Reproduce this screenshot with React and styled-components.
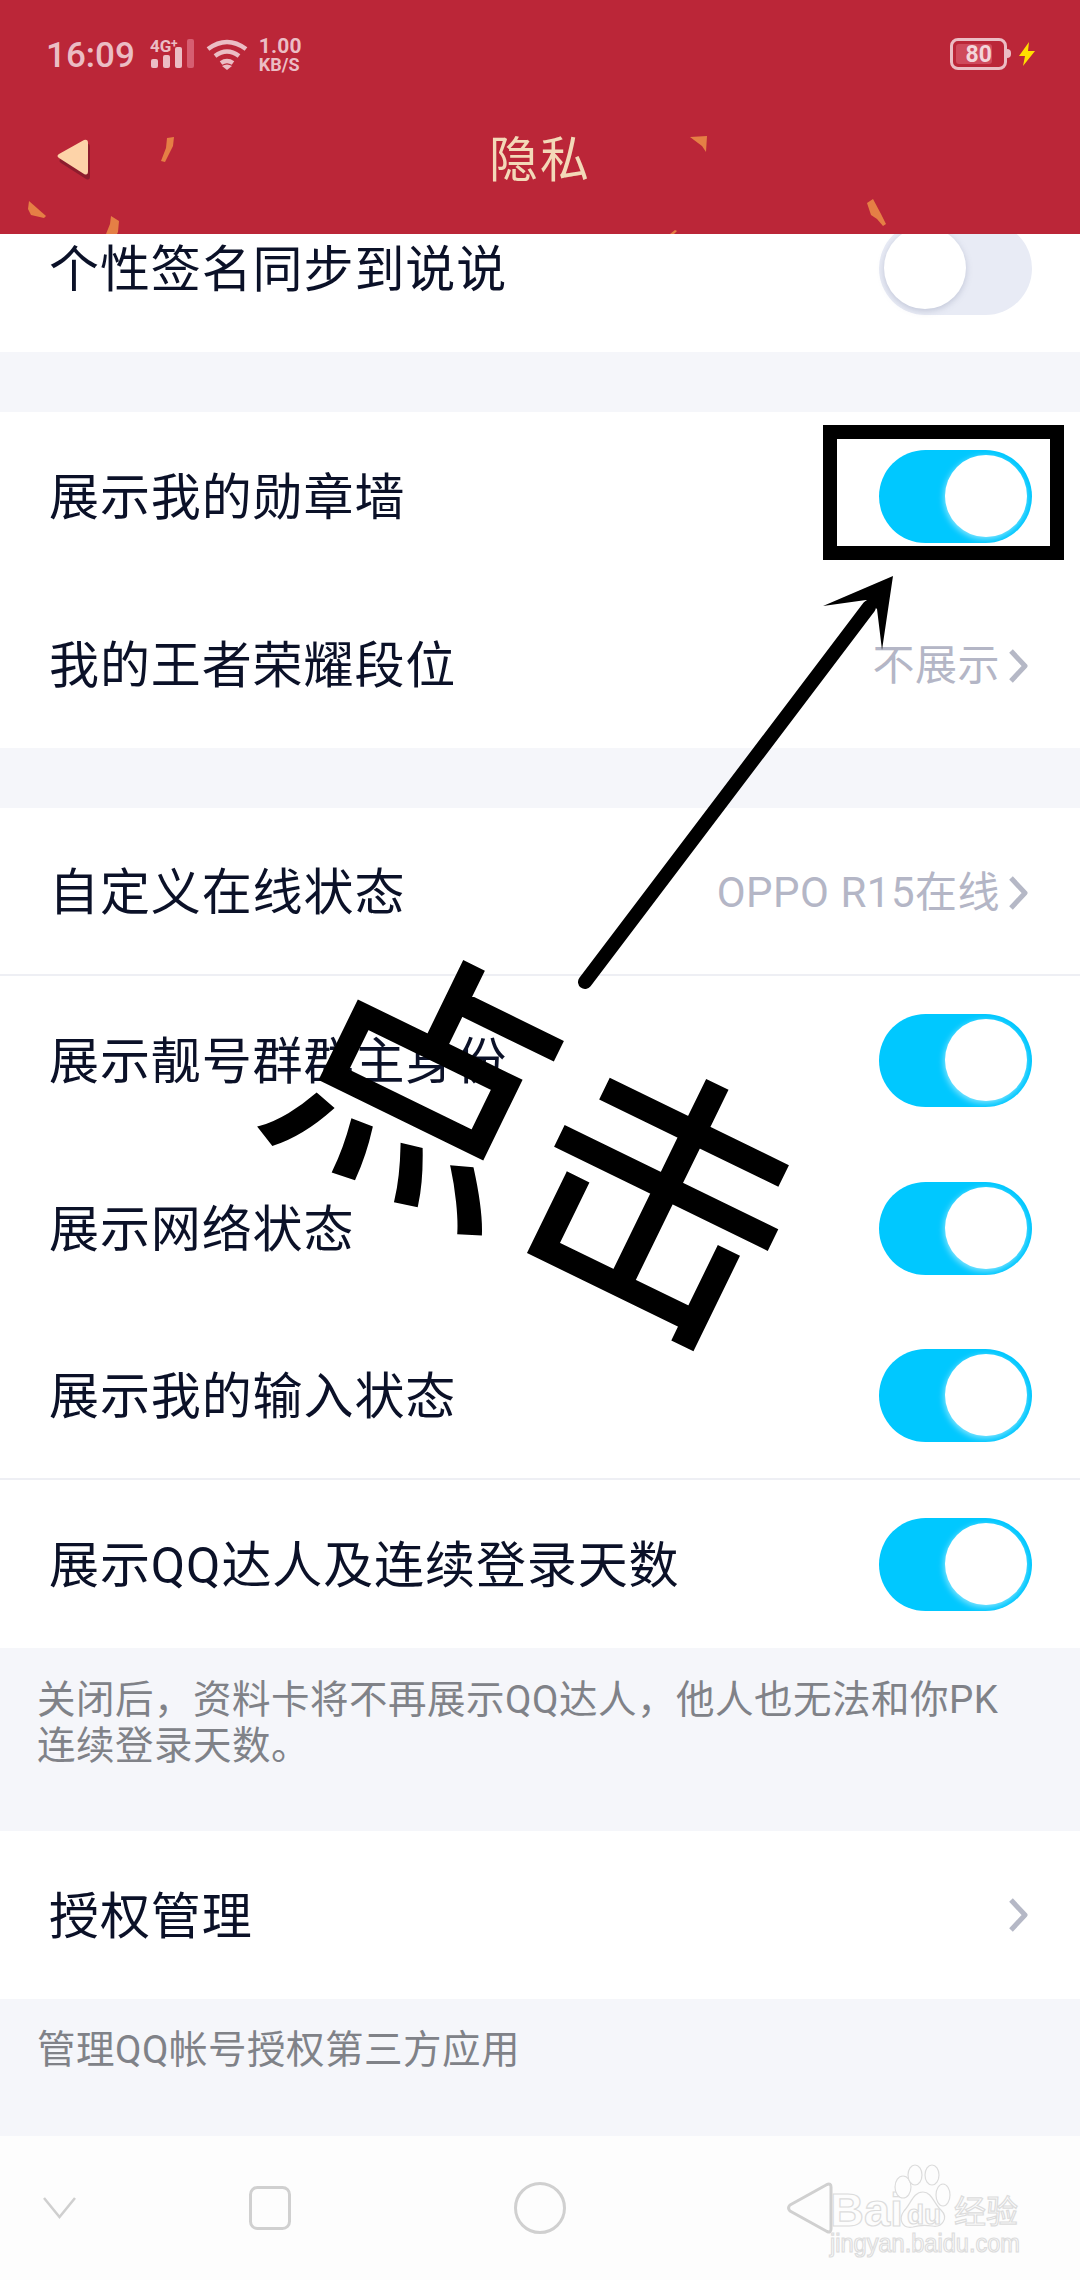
import React from "react";
import styled, { createGlobalStyle } from "styled-components";

const Global = createGlobalStyle`
  html, body { margin: 0; padding: 0; background: #f5f6fa; }
  * { box-sizing: border-box; }
`;

const FONT = `Roboto, "Noto Sans CJK SC", sans-serif`;

const Page = styled.div`
  position: relative;
  width: 1080px;
  height: 2280px;
  display: flex;
  flex-direction: column;
  overflow: hidden;
  background: #f5f6fa;
  font-family: ${FONT};
`;
const Header = styled.header`
  position: relative;
  z-index: 2;
  flex: 0 0 234px;
  display: flex;
  flex-direction: column;
  background: #bb2638;
`;
const Confetti = styled.svg`
  position: absolute;
  inset: 0;
`;
const StatusBar = styled.div`
  height: 108px;
  display: flex;
  align-items: center;
  padding: 0 45px 0 46px;
  color: #ebbdc4;
`;
const Time = styled.span`
  font-size: 35px;
  line-height: 44px;
  font-weight: 500;
  margin: 4px 15px 0 0;
  white-space: nowrap;
`;
const Glyphs = styled.svg`
  display: block;
  flex: none;
  margin-left: ${(p) => p.$ml || 0}px;
`;
const Speed = styled.div`
  display: flex;
  flex-direction: column;
  margin-left: 11px;
  font-weight: 700;
`;
const SpeedValue = styled.span`
  font-size: 21px;
  line-height: 20px;
  letter-spacing: 0.2px;
`;
const SpeedUnit = styled.span`
  font-size: 18px;
  line-height: 17px;
`;
const StatusRight = styled.div`
  margin-left: auto;
  display: flex;
  align-items: center;
`;
const Battery = styled.div`
  position: relative;
  width: 57px;
  height: 32px;
  border: 3px solid #ebbdc4;
  border-radius: 8px;
  padding: 3px;
  display: flex;
  &::after {
    content: "";
    position: absolute;
    right: -7px;
    top: 8px;
    width: 4px;
    height: 9px;
    border-radius: 0 4px 4px 0;
    background: #ebbdc4;
  }
`;
const BatteryFill = styled.div`
  width: 36px;
  height: 100%;
  background: #cf4a5c;
  border-radius: 3px;
  display: flex;
  align-items: center;
  justify-content: flex-end;
  font-size: 23px;
  font-weight: 700;
  color: #f3d5da;
  line-height: 1;
  white-space: nowrap;
`;
const TitleBar = styled.div`
  position: relative;
  height: 104px;
  display: flex;
  align-items: center;
  justify-content: center;
`;
const BackIcon = styled.svg`
  position: absolute;
  left: 50px;
  top: 26px;
`;
const Title = styled.h1`
  margin: 0;
  font-size: 49px;
  font-weight: 400;
  color: #f3d9b8;
  letter-spacing: 2px;
  line-height: 1;
`;
const Scroll = styled.main`
  flex: 1;
  min-height: 0;
  overflow: hidden;
`;
const ScrollInner = styled.div`
  margin-top: -50px;
`;
const Section = styled.section`
  background: #fff;
  margin-top: ${(p) => p.$gap || 0}px;
`;
const Row = styled.div`
  height: 168px;
  padding: 0 48px 0 49px;
  display: flex;
  align-items: center;
  justify-content: space-between;
  border-bottom: ${(p) => (p.$divider ? "2px solid #eeeff4" : "none")};
`;
const Label = styled.span`
  font-size: 50px;
  line-height: 60px;
  margin-top: 3px;
  letter-spacing: 0.9px;
  color: #0b1128;
  white-space: nowrap;
`;
const Value = styled.div`
  display: flex;
  align-items: center;
  gap: 9px;
  font-size: 42px;
  line-height: 50px;
  letter-spacing: 0.5px;
  margin-top: 3px;
  color: #b4b6c6;
  white-space: nowrap;
`;
const Chevron = styled.svg`
  display: block;
  flex: none;
  margin-right: 3px;
`;
const Track = styled.div`
  width: 153px;
  height: 93px;
  border-radius: 47px;
  padding: 5px 5px;
  display: flex;
  align-items: center;
  justify-content: ${(p) => (p.$on ? "flex-end" : "flex-start")};
  background: ${(p) => (p.$on ? "#00c8ff" : "#e8ebf5")};
`;
const Knob = styled.div`
  width: 82px;
  height: 82px;
  border-radius: 50%;
  background: #fff;
  box-shadow: ${(p) => (p.$on ? "-1px 2px 6px rgba(255,255,255,.55)" : "0 2px 6px rgba(120,130,160,.35)")};
`;
const Note = styled.p`
  margin: 0;
  height: ${(p) => p.$h}px;
  padding: ${(p) => p.$pt}px 37px 0 37px;
  font-size: 38.5px;
  line-height: 46px;
  color: #808288;
  letter-spacing: 0.5px;
  white-space: nowrap;
`;
const Nav = styled.nav`
  flex: 0 0 144px;
  display: flex;
  align-items: center;
  padding-left: 43px;
  background: #fdfdfd;
`;
const NavGlyph = styled.svg`
  display: block;
  flex: none;
  margin-left: ${(p) => p.$ml || 0}px;
`;
const Overlay = styled.svg`
  position: absolute;
  left: 0;
  top: 0;
  z-index: 3;
  pointer-events: none;
`;
const HandWord = styled.div`
  position: absolute;
  z-index: 3;
  left: 280px;
  top: 979px;
  font-family: "Noto Sans CJK SC", sans-serif;
  font-size: 268px;
  font-weight: 400;
  line-height: 290px;
  color: #000;
  -webkit-text-stroke: 4px #000;
  white-space: nowrap;
  transform: rotate(26deg);
  pointer-events: none;
`;
const Watermark = styled.svg`
  position: absolute;
  z-index: 4;
  left: 825px;
  top: 2160px;
`;
const WmText = styled.text`
  fill: #fdfdfd;
  stroke: #dcdcdc;
  stroke-width: 1.2px;
  font-family: ${(p) => p.$f || `"Liberation Sans", sans-serif`};
  font-weight: ${(p) => p.$w || 700};
  font-size: ${(p) => p.$s}px;
`;

const Toggle = ({ on }) => (
  <Track $on={on}>
    <Knob $on={on} />
  </Track>
);

const Arrow = () => (
  <Chevron width="20" height="36" viewBox="0 0 20 36">
    <path d="M2 3 L16 18 L2 33" fill="none" stroke="#b5b8c6" strokeWidth="5" strokeLinejoin="round" />
  </Chevron>
);

const toggles = ["展示靓号群群主身份", "展示网络状态", "展示我的输入状态", "展示QQ达人及连续登录天数"];

export default function App() {
  return (
    <Page>
      <Global />
      <Header>
        <Confetti width="1080" height="234" viewBox="0 0 1080 234">
          <g fill="#e57f45">
            <path d="M167 138 L174 137 L173 146 L165 162 L161 161 L166 148 Z" />
            <path d="M29 201 L46 216 L44 218 L31 215 L28 209 Z" />
            <path d="M111 216 L119 221 L118 232 L117 234 L106 234 L110 224 Z" />
            <path d="M690 137 L707 136 L706 152 L702 146 Z" />
            <path d="M867 203 L873 199 L881 214 L886 224 L883 226 L877 219 L871 215 Z" />
            <path d="M670 234 L675 230 L677 231 L674 234 Z" />
          </g>
        </Confetti>
        <StatusBar>
          <Time>16:09</Time>
          <Glyphs width="44" height="32" viewBox="0 0 44 32">
            <text x="0" y="14" fontFamily="Roboto, sans-serif" fontWeight="700" fontSize="17" fill="#ebbdc4">4G</text>
            <text x="21" y="10" fontFamily="Roboto, sans-serif" fontWeight="700" fontSize="12" fill="#ebbdc4">+</text>
            <rect x="1" y="21" width="7" height="9" rx="2" fill="#ebbdc4" />
            <rect x="13" y="17" width="7" height="13" rx="2" fill="#ebbdc4" />
            <rect x="25" y="9" width="7" height="21" rx="2" fill="#ebbdc4" />
            <rect x="37" y="1" width="7" height="29" rx="2" fill="#d65e71" />
          </Glyphs>
          <Glyphs $ml={12} width="42" height="32" viewBox="0 0 42 32">
            <g fill="none" stroke="#ebbdc4" strokeWidth="4.5">
              <path d="M2 11 Q21 -3 40 11" />
              <path d="M9 18 Q21 9 33 18" />
              <path d="M15 25 Q21 21 27 25" />
            </g>
            <path d="M21 32 L16 28 Q21 25 26 28 Z" fill="#ebbdc4" />
          </Glyphs>
          <Speed>
            <SpeedValue>1.00</SpeedValue>
            <SpeedUnit>KB/S</SpeedUnit>
          </Speed>
          <StatusRight>
            <Battery>
              <BatteryFill>80</BatteryFill>
            </Battery>
            <Glyphs $ml={12} width="16" height="24" viewBox="0 0 16 24">
              <path d="M10 0 L0 14 L6 14 L4 24 L16 9 L9 9 Z" fill="#ffdf00" />
            </Glyphs>
          </StatusRight>
        </StatusBar>
        <TitleBar>
          <BackIcon width="46" height="52" viewBox="0 0 46 52">
            <path d="M10 21 L35 7 Q39 6 39 10 L39 39 Q39 44 35 42 L10 26 Q7 24 10 21 Z" fill="#7d1a2a" opacity=".75" transform="translate(1 3)" />
            <path d="M9 20 L34 6 Q38 5 38 9 L38 37 Q38 42 34 40 L9 24 Q6 22 9 20 Z" fill="#fdd3a8" />
          </BackIcon>
          <Title>隐私</Title>
        </TitleBar>
      </Header>

      <Scroll>
        <ScrollInner>
          <Section>
            <Row>
              <Label>个性签名同步到说说</Label>
              <Toggle on={false} />
            </Row>
          </Section>
          <Section $gap={60}>
            <Row>
              <Label>展示我的勋章墙</Label>
              <Toggle on />
            </Row>
            <Row>
              <Label>我的王者荣耀段位</Label>
              <Value>不展示<Arrow /></Value>
            </Row>
          </Section>
          <Section $gap={60}>
            <Row $divider>
              <Label>自定义在线状态</Label>
              <Value>OPPO R15在线<Arrow /></Value>
            </Row>
            {toggles.map((t, i) => (
              <Row key={t} $divider={i === 2}>
                <Label>{t}</Label>
                <Toggle on />
              </Row>
            ))}
          </Section>
          <Note $h={183} $pt={29}>
            关闭后，资料卡将不再展示QQ达人，他人也无法和你PK
            <br />
            连续登录天数。
          </Note>
          <Section>
            <Row>
              <Label>授权管理</Label>
              <Arrow />
            </Row>
          </Section>
          <Note $h={137} $pt={28}>管理QQ帐号授权第三方应用</Note>
        </ScrollInner>
      </Scroll>

      <Nav>
        <NavGlyph width="33" height="22" viewBox="0 0 33 22">
          <path d="M1 1 L16.5 20 L32 1" fill="none" stroke="#cfcfcf" strokeWidth="2.5" />
        </NavGlyph>
        <NavGlyph $ml={173} width="42" height="44" viewBox="0 0 42 44">
          <rect x="1.5" y="1.5" width="39" height="41" rx="7" fill="none" stroke="#d0d0d0" strokeWidth="3" />
        </NavGlyph>
        <NavGlyph $ml={223} width="52" height="54" viewBox="0 0 52 54">
          <circle cx="26" cy="27" r="24.5" fill="none" stroke="#d0d0d0" strokeWidth="3" />
        </NavGlyph>
        <NavGlyph $ml={221} width="46" height="52" viewBox="0 0 46 52">
          <path d="M3 23 L40 2.5 Q44 1 44 5 L44 47 Q44 51 40 49.5 L3 29 Q0 26 3 23 Z" fill="none" stroke="#d0d0d0" strokeWidth="3" strokeLinejoin="round" />
        </NavGlyph>
      </Nav>

      <Watermark width="205" height="105" viewBox="825 2160 205 105">
        <WmText $s={47} x="830" y="2226">Bai</WmText>
        <g fill="#fdfdfd" stroke="#dcdcdc" strokeWidth="1.2">
          <ellipse cx="903" cy="2187" rx="8" ry="11" />
          <ellipse cx="915" cy="2175" rx="7" ry="10" />
          <ellipse cx="932" cy="2175" rx="7" ry="10" />
          <ellipse cx="943" cy="2195" rx="7" ry="11" />
          <path d="M923 2192 C932 2192 934 2204 941 2210 C949 2218 942 2228 932 2226 C925 2225 920 2225 913 2227 C902 2229 898 2219 904 2211 C911 2204 913 2192 923 2192 Z" />
        </g>
        <WmText $s={28} x="907" y="2224">du</WmText>
        <WmText $s={32} $w={400} $f={`"Noto Sans CJK SC", sans-serif`} x="954" y="2223">经验</WmText>
        <WmText $s={25} $w={400} x="830" y="2252" textLength="190" lengthAdjust="spacingAndGlyphs">jingyan.baidu.com</WmText>
      </Watermark>

      <Overlay width="1080" height="2280" viewBox="0 0 1080 2280">
        <rect x="830" y="432" width="227" height="121" fill="none" stroke="#000" strokeWidth="14" />
        <path d="M585 982 L869 607" stroke="#000" strokeWidth="14" strokeLinecap="round" fill="none" />
        <path d="M893 576 L823 606 L866 600 L877 609 L882 650 Z" fill="#000" />
      </Overlay>
      <HandWord>点击</HandWord>
    </Page>
  );
}
